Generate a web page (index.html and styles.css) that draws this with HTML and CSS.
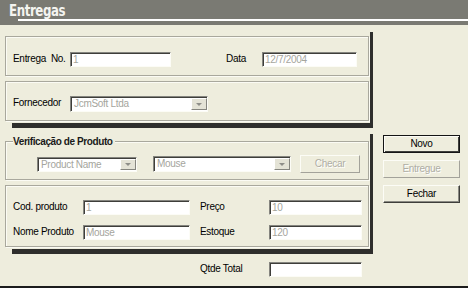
FILE: index.html
```html
<!DOCTYPE html>
<html lang="pt">
<head>
    <meta charset="UTF-8">
    <title>Entregas</title>
    <link rel="stylesheet" href="styles.css">
</head>
<body>
    <div class="window">
        <div class="titlebar">
            <div class="title">Entregas</div>
            <div class="rule"></div>
        </div>

        <div class="content">
            <div class="forms">

                <div class="panel panel-top">
                    <div class="group group-entrega">
                        <div class="row">
                            <span class="lbl lbl-entrega">Entrega&nbsp; No.</span>
                            <input class="field f-num" type="text" value="1" disabled>
                            <span class="lbl lbl-data">Data</span>
                            <input class="field f-data" type="text" value="12/7/2004" disabled>
                        </div>
                    </div>
                    <div class="group group-fornecedor">
                        <div class="row">
                            <span class="lbl lbl-entrega">Fornecedor</span>
                            <div class="combo c-fornecedor">
                                <span class="combo-value">JcmSoft Ltda</span>
                                <span class="combo-btn"><i class="arrow"></i></span>
                            </div>
                        </div>
                    </div>
                </div>

                <div class="panel panel-produto">
                    <div class="group group-verifica">
                        <span class="legend">Verificação de Produto</span>
                        <div class="row">
                            <div class="combo c-tipo">
                                <span class="combo-value">Product Name</span>
                                <span class="combo-btn"><i class="arrow"></i></span>
                            </div>
                            <div class="combo c-nome">
                                <span class="combo-value">Mouse</span>
                                <span class="combo-btn"><i class="arrow"></i></span>
                            </div>
                            <div class="btn btn-checar disabled">Checar</div>
                        </div>
                    </div>
                    <div class="group group-detalhe">
                        <div class="row">
                            <span class="lbl lbl-prod">Cod. produto</span>
                            <input class="field f-prod" type="text" value="1" disabled>
                            <span class="lbl lbl-small">Preço</span>
                            <input class="field f-right" type="text" value="10" disabled>
                        </div>
                        <div class="row row-second">
                            <span class="lbl lbl-prod">Nome Produto</span>
                            <input class="field f-prod" type="text" value="Mouse" disabled>
                            <span class="lbl lbl-small">Estoque</span>
                            <input class="field f-right" type="text" value="120" disabled>
                        </div>
                    </div>
                </div>

                <div class="row row-total">
                    <span class="lbl lbl-small">Qtde Total</span>
                    <input class="field f-right" type="text" value="">
                </div>
            </div>

            <div class="actions">
                <div class="btn btn-default">Novo</div>
                <div class="btn disabled">Entregue</div>
                <div class="btn">Fechar</div>
            </div>
        </div>
    </div>
</body>
</html>
```

FILE: styles.css
```css
html, body
{
    margin: 0;
    padding: 0;
}

body
{
    background-color: #eeeddd;
    font-family: "Liberation Sans", Arial, sans-serif;
    font-size: 10px;
    letter-spacing: -0.3px;
    color: #000;
    width: 468px;
    height: 288px;
    overflow: hidden;
}

.window
{
    height: 286px;
    border-bottom: 2px solid #1c1c1c;
}

/* title bar */
.titlebar
{
    height: 25px;
    background-color: #7a7a73;
}

.title
{
    height: 19px;
    padding-left: 9px;
    font-family: "DejaVu Sans Condensed", "DejaVu Sans", sans-serif;
    font-weight: bold;
    font-size: 16px;
    line-height: 21px;
    color: #f4f4f0;
    letter-spacing: -0.5px;
    transform: scaleX(0.82);
    transform-origin: 9px 0;
}

.rule
{
    margin-left: 18px;
    height: 2px;
    background-color: #fff;
}

/* main area */
.content
{
    display: flex;
}

.forms
{
    width: 374px;
    padding-top: 11px;
}

.actions
{
    display: flex;
    flex-direction: column;
    gap: 7px;
    padding-left: 9px;
    padding-top: 110px;
}

/* panels with dark shadow */
.panel
{
    position: relative;
    margin-left: 5px;
    width: 364px;
}

.panel::after
{
    content: "";
    position: absolute;
    left: 7px;
    top: -4px;
    right: -4px;
    bottom: -7px;
    border-right: 3px solid #2e2e2c;
    border-bottom: 5px solid #2e2e2c;
}

.panel-produto
{
    margin-top: 20px;
}

.panel-produto::after
{
    top: -7px;
    bottom: -7px;
}

.group
{
    position: relative;
    border: 1px solid #a9a89d;
    box-shadow: inset 1px 1px #fbfbf4, 1px 1px #fbfbf4;
    box-sizing: border-box;
    padding-left: 7px;
}

.group-entrega
{
    height: 40px;
    padding-top: 15px;
}

.group-fornecedor
{
    margin-top: 5px;
    height: 40px;
    padding-top: 14px;
}

.group-verifica
{
    height: 39px;
    padding-top: 13px;
    padding-left: 31px;
}

.group-detalhe
{
    margin-top: 5px;
    height: 62px;
    padding-top: 14px;
}

.legend
{
    position: absolute;
    left: 7px;
    top: -6px;
    padding-right: 2px;
    background-color: #eeeddd;
    font-weight: bold;
    line-height: 11px;
    color: #1a1a1a;
    white-space: nowrap;
    letter-spacing: -0.4px;
}

.row
{
    display: flex;
    align-items: center;
}

.row-second
{
    margin-top: 10px;
}

.row-total
{
    margin-top: 15px;
    padding-left: 200px;
}

/* labels */
.lbl
{
    line-height: 13px;
    margin-top: -3px;
    white-space: nowrap;
}

.lbl-entrega
{
    width: 57px;
}

.lbl-data
{
    width: 36px;
    margin-left: 55px;
}

.lbl-prod
{
    width: 70px;
}

.lbl-small
{
    width: 69px;
}

.group-detalhe .lbl-small
{
    margin-left: 10px;
}

/* text fields */
.field
{
    box-sizing: border-box;
    height: 15px;
    margin: 0;
    padding: 0 2px;
    border: 1px solid;
    border-color: #85857f #fcfcf6 #fcfcf6 #85857f;
    box-shadow: inset 1px 1px #3e3e3a;
    background-color: #fff;
    font-family: inherit;
    font-size: 10px;
    letter-spacing: -0.3px;
    color: #a5a59d;
    outline: none;
}

.f-num
{
    width: 101px;
}

.f-data
{
    width: 95px;
}

.f-prod
{
    width: 107px;
}

.f-right
{
    width: 93px;
}

/* combo boxes */
.combo
{
    box-sizing: border-box;
    display: flex;
    align-items: stretch;
    height: 16px;
    border: 1px solid;
    border-color: #85857f #fcfcf6 #fcfcf6 #85857f;
    box-shadow: inset 1px 1px #3e3e3a;
    background-color: #fff;
}

.combo-value
{
    flex: 1;
    padding-left: 3px;
    line-height: 14px;
    color: #a5a59d;
    white-space: nowrap;
}

.combo-btn
{
    box-sizing: border-box;
    width: 16px;
    margin: 1px 0 1px 0;
    display: flex;
    align-items: center;
    justify-content: center;
    background-color: #e4e3d6;
    border: 1px solid;
    border-color: #fff #86867f #86867f #fff;
}

.arrow
{
    width: 0;
    height: 0;
    border-left: 3px solid transparent;
    border-right: 3px solid transparent;
    border-top: 3px solid #8e8e88;
}

.c-fornecedor
{
    width: 138px;
}

.c-tipo
{
    width: 100px;
    height: 15px;
}

.c-nome
{
    width: 138px;
    margin-left: 16px;
}

/* buttons */
.btn
{
    box-sizing: border-box;
    width: 77px;
    height: 18px;
    line-height: 15px;
    text-align: center;
    border: 1px solid;
    border-color: #fcfcf6 #3e3e3a #3e3e3a #fcfcf6;
    box-shadow: inset -1px -1px #8a8a83;
    cursor: pointer;
}

.btn-default
{
    border: 1px solid #141414;
    box-shadow: inset 1px 1px #fcfcf6, inset -1px -1px #3e3e3a;
}

.btn.disabled
{
    color: #aeada4;
    text-shadow: 1px 1px #fff;
    border-color: #fcfcf6 #a3a29a #a3a29a #fcfcf6;
    box-shadow: none;
}

.btn-checar
{
    width: 60px;
    margin-left: 9px;
}
```
